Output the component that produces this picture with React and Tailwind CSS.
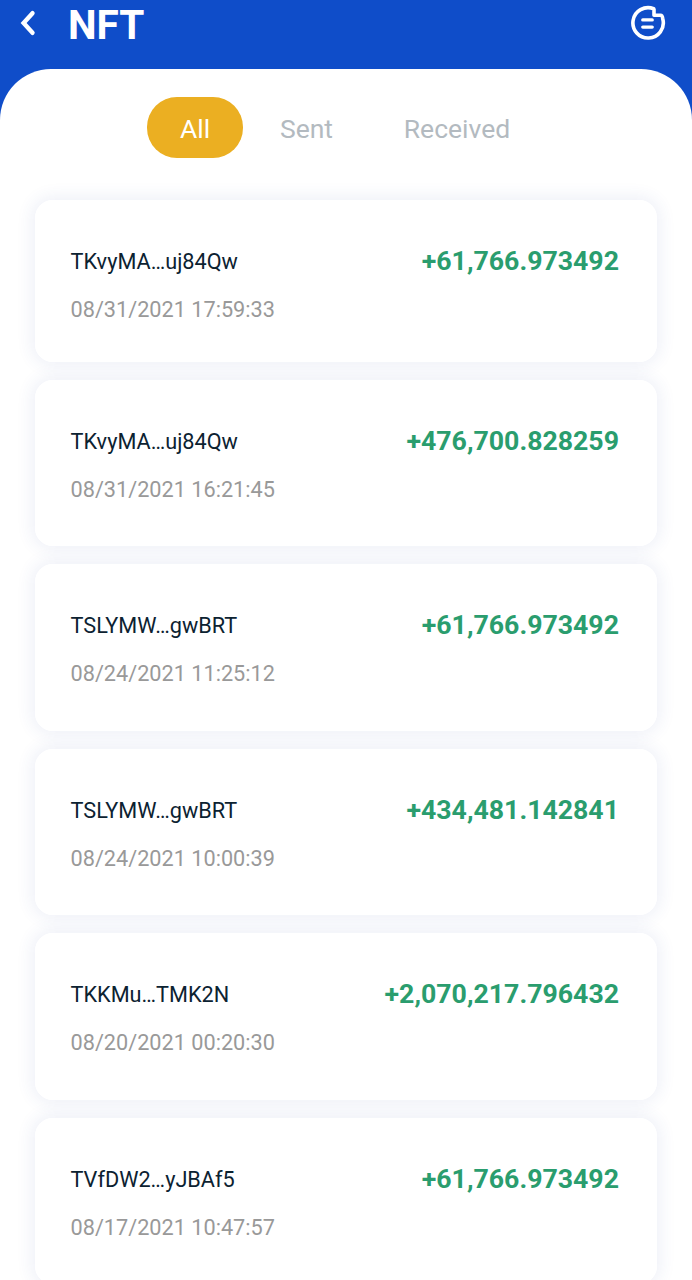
import { useState } from 'react';

const tabs = [
  { name: 'All', className: 'w-[96px]' },
  { name: 'Sent', className: 'w-[127px]' },
  { name: 'Received', className: 'w-[174px]' },
];

const transactions = [
  { address: 'TKvyMA…uj84Qw', date: '08/31/2021 17:59:33', amount: '+61,766.973492', height: 'h-[162.4px]' },
  { address: 'TKvyMA…uj84Qw', date: '08/31/2021 16:21:45', amount: '+476,700.828259', height: 'h-[166px]' },
  { address: 'TSLYMW…gwBRT', date: '08/24/2021 11:25:12', amount: '+61,766.973492', height: 'h-[166.5px]' },
  { address: 'TSLYMW…gwBRT', date: '08/24/2021 10:00:39', amount: '+434,481.142841', height: 'h-[166.5px]' },
  { address: 'TKKMu…TMK2N', date: '08/20/2021 00:20:30', amount: '+2,070,217.796432', height: 'h-[166.5px]' },
  { address: 'TVfDW2…yJBAf5', date: '08/17/2021 10:47:57', amount: '+61,766.973492', height: 'h-[166.5px]' },
];

function Header() {
  return (
    <header className="h-[69px] shrink-0 flex items-start pl-5 pr-[26px] text-white">
      <svg className="mt-[10px] w-4 h-[26px]" viewBox="0 0 16 26" fill="none" stroke="currentColor" strokeWidth="4.4" strokeLinecap="round" strokeLinejoin="miter">
        <path d="M12.5 3.2L3.6 13l8.9 9.8" />
      </svg>
      <h1 className="ml-8 mt-[3px] text-[40.5px] leading-[44px] font-bold">NFT</h1>
      <svg className="ml-auto mt-[5px] w-9 h-9" viewBox="0 0 36 36" fill="none" stroke="currentColor" strokeWidth="3.6" strokeLinecap="round" strokeLinejoin="round">
        <path d="M23.6 3.7A15.2 15.2 0 1 0 32.8 14Q32.4 10.2 30.5 10.2H24V4.2" />
        <path d="M12.8 14.9h9.4M12.8 22.1h9.4" strokeWidth="3.4" />
      </svg>
    </header>
  );
}

function TransactionCard({ transaction }) {
  return (
    <li className={`${transaction.height} shrink-0 rounded-[18px] shadow-[0_0_16px_4px_rgba(50,75,170,0.08)]`}>
      {/* White face sits above the shadows of the neighbouring cards */}
      <div className="relative z-10 h-full rounded-[18px] bg-white pl-[35.5px] pr-[38px] pt-[44px] flex justify-between items-start">
        <div className="mt-px">
          <p className="text-[21.7px] leading-[34px] text-[#0c2231]">{transaction.address}</p>
          <p className="mt-[14px] text-[21.7px] leading-[34px] text-[#999999]">{transaction.date}</p>
        </div>
        <p className="text-[26.7px] leading-[34px] font-bold text-[#2a9d6e]">{transaction.amount}</p>
      </div>
    </li>
  );
}

export default function App() {
  const [activeTab, setActiveTab] = useState('All');

  return (
    <div className="h-[1280px] w-full overflow-hidden bg-[#0f4dc9] flex flex-col font-[Roboto,sans-serif]">
      <Header />

      <main className="flex-1 min-h-0 overflow-hidden rounded-t-[51px] bg-white">
        {/* Filter tabs */}
        <nav className="mt-7 ml-[147px] flex">
          {tabs.map((tab) => (
            <button
              key={tab.name}
              onClick={() => setActiveTab(tab.name)}
              className={`${tab.className} h-[60.5px] pt-1 rounded-[30px] text-[26.5px] leading-[30px] ${
                activeTab === tab.name ? 'bg-[#ebaf22] text-white' : 'text-[#b3bac0]'
              }`}
            >
              {tab.name}
            </button>
          ))}
        </nav>

        {/* Transaction list */}
        <ul className="mt-[42.5px] px-[35px] flex flex-col gap-[18px]">
          {transactions.map((transaction) => (
            <TransactionCard key={transaction.date} transaction={transaction} />
          ))}
        </ul>
      </main>
    </div>
  );
}
